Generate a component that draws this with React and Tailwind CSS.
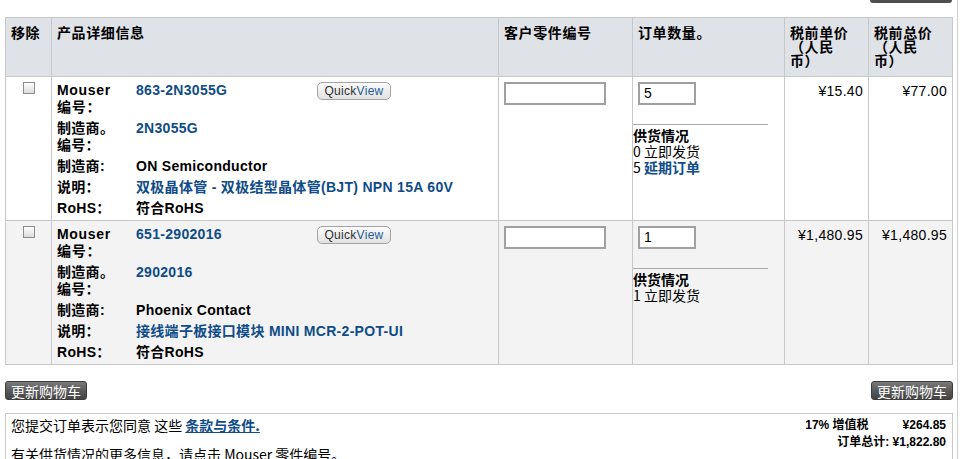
import React from 'react';

const BLUE = 'text-[#0f4c88]';

const Checkbox = () => (
  <div className="mx-auto mt-[5px] h-[12px] w-[12px] border border-[#8c8c8c] bg-gradient-to-b from-white to-[#dcdcdc]" />
);

const QuickView = () => (
  <button className="flex h-[18px] w-[74px] items-center justify-center rounded-[5px] border border-[#a3a3a3] bg-gradient-to-b from-[#fbfbfb] to-[#e2e2e2] text-[12px] font-medium tracking-[0.3px] shadow-[inset_0_1px_0_#fff]">
    <span className="text-[#2e2e2e]">Quick</span>
    <span className="text-[#1f5a96]">View</span>
  </button>
);

const UpdateButton = () => (
  <button className="flex h-[19px] w-[82px] items-center justify-center rounded-[3px] border border-[#3c3c3c] bg-gradient-to-b from-[#7a7a7a] via-[#5a5a5a] to-[#444] text-[14px] text-white font-['Noto_Sans_CJK_SC',sans-serif] leading-none">
    更新购物车
  </button>
);

const cell = 'border-r border-b border-[#c8c8c8]';
const head = `${cell} bg-[#dfe2e7] pl-[5px] pt-[7px] text-[14px] font-bold leading-[14px] tracking-[0.6px] font-['Noto_Sans_CJK_SC',sans-serif]`;

const ProductRow = ({ bg, mouser, mfrNo, mfr, desc, qty, price, total, backorder }) => (
  <>
    <div className={`${cell} ${bg}`}>
      <Checkbox />
    </div>
    <div className={`${cell} ${bg} pl-[5px] pt-[5px]`}>
      <div className="grid grid-cols-[79px_1fr] gap-y-[4px] text-[14px] font-bold leading-[17px] tracking-[0.3px]">
        <div className="tracking-[0.7px]">Mouser<br />编号：</div>
        <div className="flex items-start">
          <span className={`w-[181px] ${BLUE}`}>{mouser}</span>
          <QuickView />
        </div>
        <div>制造商。<br />编号：</div>
        <div className={BLUE}>{mfrNo}</div>
        <div>制造商:</div>
        <div>{mfr}</div>
        <div>说明：</div>
        <div className={BLUE}>{desc}</div>
        <div>RoHS：</div>
        <div>符合RoHS</div>
      </div>
    </div>
    <div className={`${cell} ${bg} pl-[5px] pt-[5px]`}>
      <div className="h-[23px] w-[102px] border-2 border-[#a0a0a0] bg-white" />
    </div>
    <div className={`${cell} ${bg} pt-[5px]`}>
      <div className="ml-[5px] flex h-[23px] w-[58px] items-center border-2 border-[#a0a0a0] bg-white pl-[4px] text-[14px]">
        {qty}
      </div>
      <div className="mt-[19px] h-px w-[135px] bg-[#ababab]" />
      <div className="pt-[2px] text-[14px] leading-[16px] font-['Noto_Sans_CJK_SC',sans-serif]">
        <div className="font-bold">供货情况</div>
        <div>{backorder ? '0' : qty} 立即发货</div>
        {backorder && (
          <div>
            {backorder} <span className={`font-bold ${BLUE}`}>延期订单</span>
          </div>
        )}
      </div>
    </div>
    <div className={`${cell} ${bg} pr-[5px] pt-[6px] text-right text-[14px] leading-[17px] tracking-[0.3px]`}>
      {price}
    </div>
    <div className={`${cell} ${bg} pr-[5px] pt-[6px] text-right text-[14px] leading-[17px] tracking-[0.3px]`}>
      {total}
    </div>
  </>
);

const App = () => {
  return (
    <div className="min-h-[459px] w-[958px] border-r border-[#d0d0d0] bg-white text-black font-['Liberation_Sans','Noto_Sans_CJK_SC',sans-serif]">
      {/* cut-off button above */}
      <div className="flex justify-end pr-[5px]">
        <div className="h-[3px] w-[82px] rounded-b-[3px] bg-[#4e4e4e]" />
      </div>

      {/* Cart table */}
      <div className="ml-[5px] mt-[14px] grid w-[948px] grid-cols-[46px_447px_134px_152px_84px_84px] grid-rows-[59px_144px_144px] border-l border-t border-[#c8c8c8]">
        <div className={head}>移除</div>
        <div className={head}>产品详细信息</div>
        <div className={head}>客户零件编号</div>
        <div className={head}>订单数量。</div>
        <div className={head}>
          税前单价<br />（人民<br />币）
        </div>
        <div className={head}>
          税前总价<br />（人民<br />币）
        </div>

        <ProductRow
          bg="bg-white"
          mouser="863-2N3055G"
          mfrNo="2N3055G"
          mfr="ON Semiconductor"
          desc="双极晶体管 - 双极结型晶体管(BJT) NPN 15A 60V"
          qty="5"
          backorder="5"
          price="¥15.40"
          total="¥77.00"
        />
        <ProductRow
          bg="bg-[#f3f3f3]"
          mouser="651-2902016"
          mfrNo="2902016"
          mfr="Phoenix Contact"
          desc="接线端子板接口模块 MINI MCR-2-POT-UI"
          qty="1"
          price="¥1,480.95"
          total="¥1,480.95"
        />
      </div>

      {/* Update buttons */}
      <div className="mt-[16px] flex w-[953px] justify-between pl-[5px]">
        <UpdateButton />
        <UpdateButton />
      </div>

      {/* Terms and totals */}
      <div className="ml-[5px] mt-[13px] flex w-[948px] justify-between border-l border-r border-t border-[#c8c8c8] pl-[5px] pr-[6px] pt-[3px]">
        <div className="text-[14px] font-['Noto_Sans_CJK_SC',sans-serif]">
          <div className="leading-[17px]">
            您提交订单表示您同意 这些{' '}
            <a href="#" className={`font-bold underline ${BLUE}`}>条款与条件.</a>
          </div>
          <div className="mt-[12px] leading-[17px]">有关供货情况的更多信息，请点击 Mouser 零件编号。</div>
        </div>
        <div className="text-right text-[12px] font-bold leading-[17px]">
          <div>
            17% 增值税<span className="ml-[34px]">¥264.85</span>
          </div>
          <div>订单总计: ¥1,822.80</div>
        </div>
      </div>
    </div>
  );
};

export default App;
